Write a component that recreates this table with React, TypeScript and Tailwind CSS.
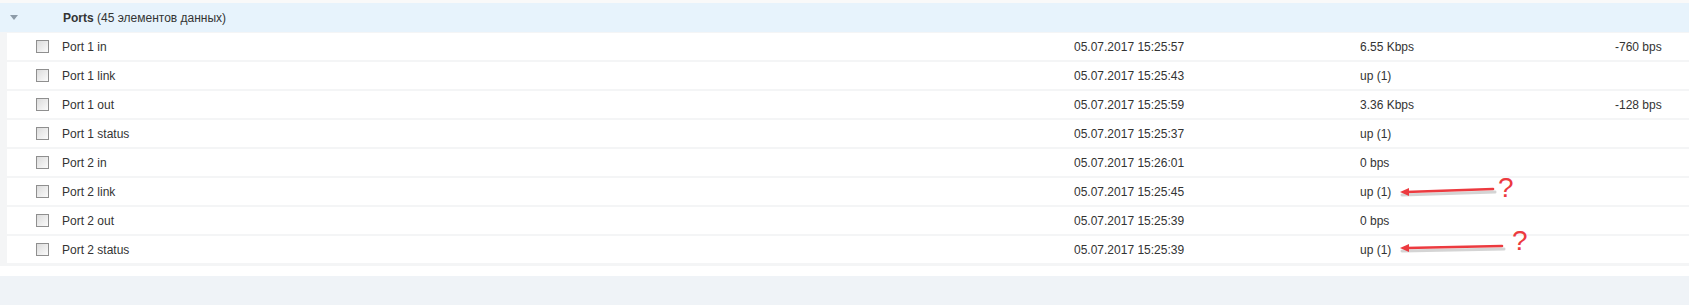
import React from "react";

type Item = { name: string; time: string; value: string; change?: string };

const items: Item[] = [
  { name: "Port 1 in", time: "05.07.2017 15:25:57", value: "6.55 Kbps", change: "-760 bps" },
  { name: "Port 1 link", time: "05.07.2017 15:25:43", value: "up (1)" },
  { name: "Port 1 out", time: "05.07.2017 15:25:59", value: "3.36 Kbps", change: "-128 bps" },
  { name: "Port 1 status", time: "05.07.2017 15:25:37", value: "up (1)" },
  { name: "Port 2 in", time: "05.07.2017 15:26:01", value: "0 bps" },
  { name: "Port 2 link", time: "05.07.2017 15:25:45", value: "up (1)" },
  { name: "Port 2 out", time: "05.07.2017 15:25:39", value: "0 bps" },
  { name: "Port 2 status", time: "05.07.2017 15:25:39", value: "up (1)" },
];

function Checkbox() {
  return (
    <span className="w-[13px] h-[13px] shrink-0 border border-[#8f8f8f] bg-gradient-to-br from-[#dcdcdc] to-[#fbfbfb]" />
  );
}

// red annotation arrow pointing left, with the grey shadow under it
function Arrow({ x1, y1, x2, y2 }: { x1: number; y1: number; x2: number; y2: number }) {
  return (
    <svg className="absolute left-0 top-0 pointer-events-none" width={1689} height={305}>
      <line x1={x1 + 2} y1={y1 + 3} x2={x2 + 2} y2={y2 + 3} stroke="#b9b9b9" strokeWidth={3} strokeLinecap="round" opacity={0.6} />
      <line x1={x1 + 6} y1={y1} x2={x2} y2={y2} stroke="#ec3a3f" strokeWidth={2.6} strokeLinecap="round" />
      <polygon points={`${x1},${y1} ${x1 + 9},${y1 - 4} ${x1 + 9},${y1 + 4}`} fill="#ec3a3f" />
    </svg>
  );
}

export default function App() {
  return (
    <div className="relative w-[1689px] h-[305px] bg-[#eff3f7] font-['Liberation_Sans',Arial,sans-serif] text-[12px] text-[#333]">
      <div className="bg-white">
        <div className="h-[3px] bg-[#f9f9f9]" />
        <div className="h-[29px] bg-[#e7f3fc] flex items-center">
          <span className="ml-[10px] w-0 h-0 border-l-[4px] border-r-[4px] border-t-[5px] border-l-transparent border-r-transparent border-t-[#8d9ba8]" />
          <span className="ml-[45px]">
            <span className="font-bold">Ports</span> (45 элементов данных)
          </span>
        </div>
        <div className="bg-[#f4f5f6] pl-[7px] pt-[1px] pb-[3px] flex flex-col gap-[2px]">
          {items.map((it) => (
            <div key={it.name} className="h-[27px] bg-white flex items-center">
              <div className="w-[29px]" />
              <Checkbox />
              <div className="ml-[13px] w-[1012px]">{it.name}</div>
              <div className="w-[286px]">{it.time}</div>
              <div className="w-[255px]">{it.value}</div>
              <div>{it.change}</div>
            </div>
          ))}
        </div>
        <div className="h-[10px] bg-white" />
      </div>

      <Arrow x1={1400} y1={192} x2={1493} y2={189} />
      <Arrow x1={1400} y1={248} x2={1502} y2={246} />
      <span className="absolute left-[1498px] top-[174px] text-[28px] leading-none text-[#ec3a3f]">?</span>
      <span className="absolute left-[1512px] top-[227px] text-[28px] leading-none text-[#ec3a3f]">?</span>
    </div>
  );
}
